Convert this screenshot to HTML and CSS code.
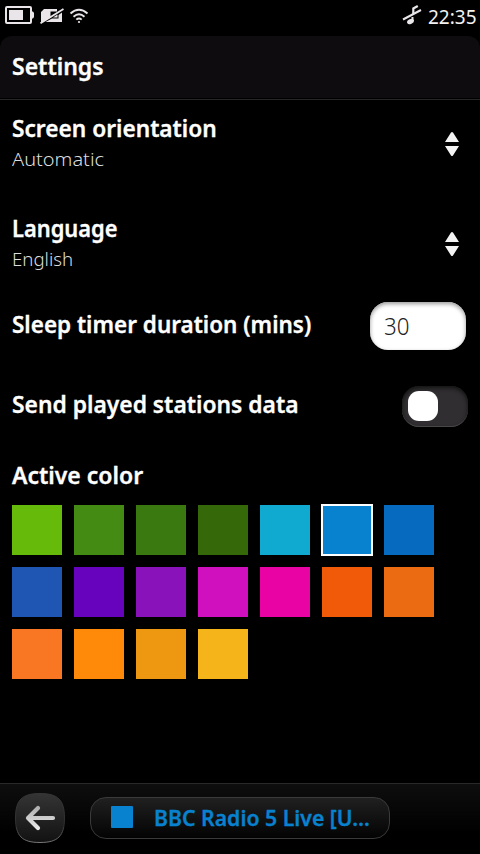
FILE: index.html
```html
<!DOCTYPE html>
<html lang="en">
<head>
<meta charset="utf-8">
<title>Settings</title>
<link rel="stylesheet" href="styles.css">
</head>
<body>
<div class="status">
  <svg class="status-left" width="94" height="36" viewBox="0 0 94 36" fill="none" stroke="#e9e5e8">
    <rect x="6" y="7" width="25" height="16" rx="1" stroke-width="2"/>
    <path d="M9 10h14v10H9zM32 11.500h1l1 1.500v4l-1 1.500h-1z" fill="#e9e5e8" stroke="none"/>
    <path d="M44 9h13v2.500h-6.500v6L41 23V12z" fill="#e9e5e8" stroke="none"/>
    <path d="M62 12.500V22H45.500l6.500-3.500h6.500V15z" fill="#e9e5e8" stroke="none"/>
    <path d="M53 17.500l4.500-3v3z" fill="#e9e5e8" stroke="none"/>
    <path d="M40.500 23.300L63.500 9" stroke-width="1.800"/>
    <path d="M70.500 13.500q8.500-7.500 17 0M73.500 16.800q5.500-5 11 0M76.300 19.600q2.700-2.400 5.400 0" stroke-width="1.900"/>
    <circle cx="79" cy="22" r="1.100" fill="#e9e5e8" stroke="none"/>
  </svg>
  <svg class="mute" width="20" height="20" viewBox="402 5 20 20" fill="none" stroke="#e9e5e8">
    <path d="M403 19.500L421 10" stroke-width="2"/>
    <path d="M413.300 14V8.500l4.500-2.500" stroke-width="2.200"/>
    <path d="M412.500 17v4" stroke-width="2"/>
    <ellipse cx="410.500" cy="21.500" rx="3.600" ry="2.400" transform="rotate(-25 410.500 21.500)" fill="#e9e5e8" stroke="none"/>
  </svg>
  <span class="clock">22:35</span>
</div>
<header class="header"><h1 class="label settings-title">Settings</h1></header>
<main class="content">
  <section class="row select">
    <div><h2 class="label orientation">Screen orientation</h2><p class="value automatic">Automatic</p></div>
    <svg class="arrows" width="14" height="24" viewBox="0 0 14 24"><path d="M0 10L6 .5Q7-.5 8 .5L14 10zM0 14h14L8 23.500q-1 1-2 0z" fill="#f3f3f3"/></svg>
  </section>
  <section class="row select">
    <div><h2 class="label language">Language</h2><p class="value english">English</p></div>
    <svg class="arrows" width="14" height="24" viewBox="0 0 14 24"><path d="M0 10L6 .5Q7-.5 8 .5L14 10zM0 14h14L8 23.500q-1 1-2 0z" fill="#f3f3f3"/></svg>
  </section>
  <section class="row timer"><h2 class="label sleep">Sleep timer duration (mins)</h2><div class="field"><span class="number">30</span></div></section>
  <section class="row send"><h2 class="label played">Send played stations data</h2><div class="switch"><div class="knob"></div></div></section>
  <h2 class="label active">Active color</h2>
  <div class="colors">
    <i class="swatch c1"></i><i class="swatch c2"></i><i class="swatch c3"></i><i class="swatch c4"></i><i class="swatch c5"></i><i class="swatch c6 selected"></i><i class="swatch c7"></i>
    <i class="swatch c8"></i><i class="swatch c9"></i><i class="swatch c10"></i><i class="swatch c11"></i><i class="swatch c12"></i><i class="swatch c13"></i><i class="swatch c14"></i>
    <i class="swatch c15"></i><i class="swatch c16"></i><i class="swatch c17"></i><i class="swatch c18"></i>
  </div>
</main>
<footer class="footer">
  <svg width="52" height="52" viewBox="0 0 52 52">
    <defs>
      <linearGradient id="back" x2="0" y2="1"><stop stop-color="#343434"/><stop offset="1" stop-color="#121212"/></linearGradient>
      <linearGradient id="rim" x2="0" y2="1"><stop stop-color="#353535"/><stop offset=".65" stop-color="#303030"/><stop offset="1" stop-color="#777"/></linearGradient>
      <linearGradient id="arrow" gradientUnits="userSpaceOnUse" x1="0" y1="13" x2="0" y2="38"><stop stop-color="#aaa"/><stop offset="1" stop-color="#eee"/></linearGradient>
    </defs>
    <path d="M26 1.500C44 1.500 50.500 8 50.500 26S44 50.500 26 50.500 1.500 44 1.500 26 8 1.500 26 1.500z" fill="url(#back)" stroke="url(#rim)"/>
    <path d="M39 26H14M24 16L14 26L24 36" fill="none" stroke="url(#arrow)" stroke-width="4.200" stroke-linecap="round" stroke-linejoin="round"/>
  </svg>
  <div class="station"><i class="stop"></i><span class="name">BBC Radio 5 Live [U…</span></div>
</footer>
</body>
</html>
```
FILE: styles.css
```css
* { box-sizing: border-box; }
body { margin: 0; width: 480px; height: 854px; display: flex; flex-direction: column; overflow: hidden; background: #000; color: #fff; font-family: "Noto Sans", "Open Sans", sans-serif; }
h1, h2, p { margin: 0; }
.status { height: 36px; display: flex; flex: none; }
.status-left { margin-right: 308px; }
.mute { margin-top: 5px; }
.clock { margin-left: 6px; font-size: 19px; line-height: 34px; white-space: nowrap; color: #f2f2f2; }
.header { height: 64px; flex: none; padding: 14px 12px 0; border-bottom: 1px solid #272727; border-radius: 12px 12px 0 0; background: #0e0c0e; box-shadow: inset 0 -1px #000; }
.label { font-size: 24px; line-height: 32px; font-weight: 600; white-space: nowrap; transform-origin: left; -webkit-text-stroke: .35px #fff; }
.value { font-size: 19px; line-height: 30px; font-weight: 300; color: #ddd; transform-origin: left; }
.label, .value { width: max-content; }
.settings-title { transform: scaleX(.957); }
.orientation { transform: scaleX(.945); }
.language { transform: scaleX(.911); }
.sleep { transform: scaleX(.937); }
.played { transform: scaleX(.951); }
.active { transform: scaleX(.957); }
.automatic { transform: scaleX(1.05); }
.english { transform: scaleX(.98); }
.number { display: inline-block; transform: scaleX(.93); transform-origin: left; }
.content { flex: 1; padding: 0 12px; }
.row { display: flex; justify-content: space-between; }
.select { height: 100px; padding-top: 12px; }
.arrows { margin: 20px 9px 0 0; }
.timer { height: 80px; align-items: flex-start; padding-top: 2px; }
.timer .label { margin-top: 6px; }
.field { width: 96px; height: 48px; margin-right: 2px; padding-left: 14px; border-radius: 18px; background: #fff; box-shadow: inset 0 2px 4px #999; color: #222; font-size: 24px; font-weight: 300; line-height: 48px; }
.send { height: 78px; padding-top: 6px; }
.send .label { margin-top: 2px; }
.switch { width: 66px; height: 41px; padding: 5px 6px; border-radius: 17px; background: #302e30; box-shadow: inset 0 2px 4px #111, inset 0 -1px #505050; }
.knob { width: 30px; height: 30px; border-radius: 11px; background: #fff; }
.active { margin-top: 1px; }
.colors { display: grid; grid-template-columns: repeat(7, 50px); gap: 12px; margin-top: 14px; }
.swatch { display: block; height: 50px; }
.selected { border: 1px solid #fff; outline: 1px solid #fff; }
.c1 { background: #66ba09; }
.c2 { background: #438b13; }
.c3 { background: #39790f; }
.c4 { background: #346808; }
.c5 { background: #10a9d0; }
.c6 { background: #0882cf; }
.c7 { background: #066bbe; }
.c8 { background: #1f56b4; }
.c9 { background: #6702bd; }
.c10 { background: #8a12bb; }
.c11 { background: #d00fbf; }
.c12 { background: #e903a5; }
.c13 { background: #f15a09; }
.c14 { background: #eb6b13; }
.c15 { background: #f97622; }
.c16 { background: #ff8908; }
.c17 { background: #ee9710; }
.c18 { background: #f4b41a; }
.footer { height: 71px; flex: none; display: flex; gap: 24px; padding: 8px 14px 0; border-top: 1px solid #292929; background: linear-gradient(#0e0e0e, #000 70%); }
.station { width: 300px; height: 42px; margin-top: 5px; display: flex; align-items: center; border: 1px solid #3a3a3a; border-radius: 16px; background: linear-gradient(#202020, #030303); }
.stop { width: 22px; height: 22px; margin-left: 20px; margin-right: 21px; margin-bottom: 2px; border-radius: 1px; background: #0882cf; }
.name { margin-bottom: 3px; color: #0882cf; font-size: 22px; line-height: 30px; font-weight: 600; white-space: nowrap; transform: scaleX(.965); transform-origin: left; -webkit-text-stroke: .35px #0882cf; }
```
